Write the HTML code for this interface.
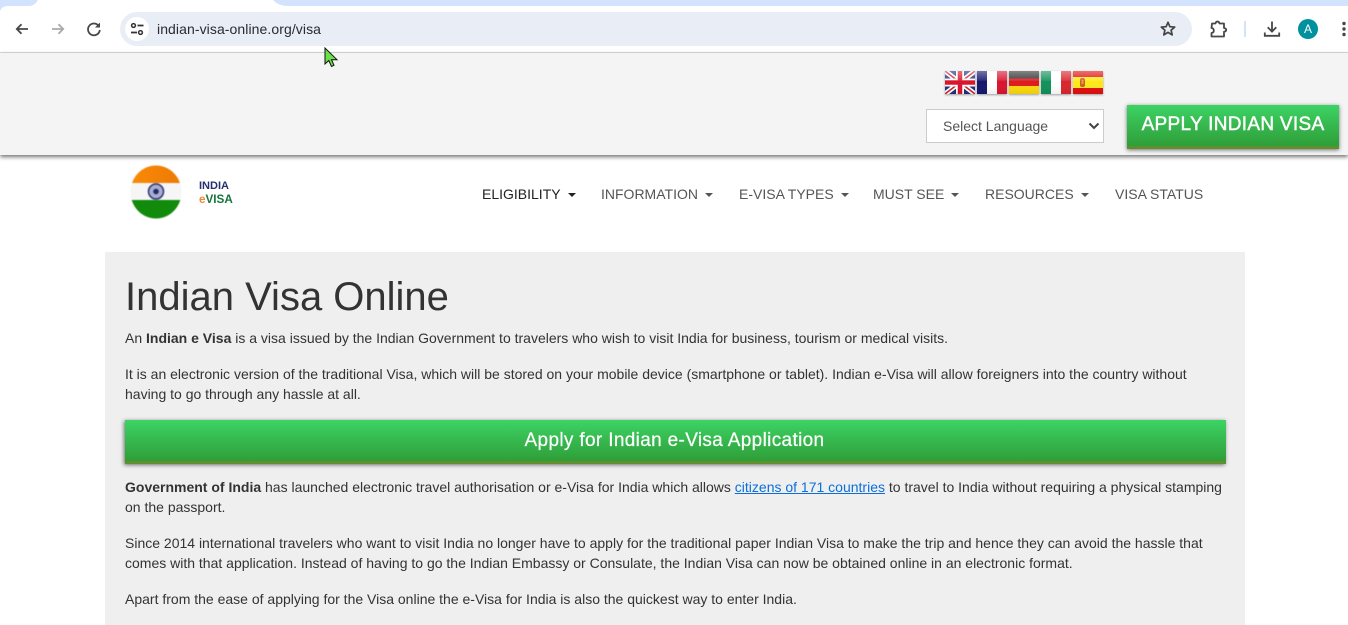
<!DOCTYPE html>
<html lang="en"><head><meta charset="utf-8"><title>Indian Visa Online</title>
<style>
html,body{margin:0;padding:0;width:1348px;height:625px;overflow:hidden;background:#fff;font-family:"Liberation Sans",Arial,sans-serif;color:#333}
.a{position:absolute;white-space:nowrap}
.p{position:absolute;left:125px;font-size:14px;line-height:20px;color:#333;white-space:nowrap}
.n{position:absolute;top:184px;font-size:14px;line-height:20px;color:#555;white-space:nowrap}
.n i{display:inline-block;width:0;height:0;border:4px solid transparent;border-top-color:#555;border-bottom:0;margin-left:7px;vertical-align:2px}
.g{background:linear-gradient(#3dd365,#2f9e38);border-bottom:3px solid #5f8f2e;box-sizing:border-box;color:#fff;text-align:center}
.f{position:absolute;top:71px;width:30px;height:23px;box-sizing:border-box;overflow:hidden;box-shadow:0 1px 2px rgba(0,0,0,.35)}
</style></head><body>

<!-- browser chrome -->
<div class="a" style="left:0;top:6px;width:1348px;height:46px;background:#fff"></div>
<svg class="a" style="left:0;top:0" width="1348" height="14" viewBox="0 0 1348 14">
<path d="M0 0H38C36 3 34 6 29 6H8C3 6 0 9 0 12Z" fill="#d3e3fd"/>
<path d="M273 0H1348V6H288C280 6 276 3 273 0Z" fill="#d3e3fd"/>
</svg>
<div class="a" style="left:0;top:52px;width:1348px;height:1px;background:#dcdcdc"></div>
<div class="a" style="left:120px;top:12px;width:1072px;height:34px;border-radius:17px;background:#e9edf6"></div>
<div class="a" style="left:125px;top:17px;width:24px;height:24px;border-radius:12px;background:#fff"></div>
<svg class="a" style="left:0;top:0" width="160" height="52" viewBox="0 0 160 52" fill="none">
<path d="M28 29H17M21.500 24.200L16.800 29l4.700 4.800" stroke="#474747" stroke-width="1.800"/>
<path d="M52 29H63M58.500 24.200L63.200 29l-4.700 4.800" stroke="#a9a9a9" stroke-width="1.800"/>
<path d="M98.600 25.800A5.900 5.900 0 1 0 99.800 30" stroke="#474747" stroke-width="1.800"/>
<path d="M100 22.500V27.500H95Z" fill="#474747"/>
<circle cx="133.500" cy="25.500" r="1.900" stroke="#333" stroke-width="1.500"/>
<path d="M137.500 25.500H143.500M131 32.500H137" stroke="#333" stroke-width="1.700"/>
<circle cx="140.500" cy="32.500" r="1.900" stroke="#333" stroke-width="1.500"/>
</svg>
<div class="a" style="left:157px;top:20px;font-size:14px;line-height:18px;letter-spacing:.08px;color:#282b30">indian-visa-online.org/visa</div>
<svg class="a" style="left:1150px;top:10px" width="198" height="38" viewBox="1150 10 198 38" fill="none">
<path d="M1168 22.300l1.900 4.400 4.800.4-3.600 3.100 1.100 4.700-4.200-2.500-4.200 2.500 1.100-4.700-3.600-3.100 4.800-.4Z" stroke="#444" stroke-width="1.700" stroke-linejoin="round"/>
<path d="M1212 23.500h3.500c.3-1.500 1.200-2 2-2s1.700.5 2 2h4.500v4.500c1.500.2 2.200 1 2.200 1.900s-.7 1.700-2.200 1.900v4.700h-12.500v-3.500c1.500-.2 2.300-1.200 2.300-2.500s-.8-2.300-2.300-2.500z" stroke="#474747" stroke-width="1.800" stroke-linejoin="round"/>
<rect x="1244" y="21" width="2" height="16" fill="#d3e3fd"/>
<path d="M1272 21.500v9.500M1267.700 27.300l4.300 4.300 4.300-4.300M1264.800 32.500v3.300h14.400v-3.300" stroke="#474747" stroke-width="1.800"/>
<circle cx="1308" cy="29" r="10" fill="#00919e"/>
<circle cx="1344" cy="23.500" r="1.700" fill="#474747"/><circle cx="1344" cy="29" r="1.700" fill="#474747"/><circle cx="1344" cy="34.500" r="1.700" fill="#474747"/>
</svg>
<div class="a" style="left:1298px;top:22px;width:20px;text-align:center;font-size:12px;line-height:14px;color:#fff">A</div>

<!-- top band -->
<div class="a" style="left:0;top:53px;width:1348px;height:102px;background:#f4f4f4;box-shadow:0 2px 4px rgba(0,0,0,.55)"></div>
<svg class="a" style="left:324px;top:47px" width="15" height="21" viewBox="0 0 15 21"><path d="M1 1V17L4.800 13.500 7.500 19.500 10 18.300 7.500 12.700H13Z" fill="#6be04a" stroke="#111" stroke-width="1"/></svg>

<!-- flags -->
<svg width="0" height="0" style="position:absolute"><defs><linearGradient id="gl" x1="0" y1="0" x2="0" y2="1"><stop offset="0" stop-color="#fff" stop-opacity=".4"/><stop offset=".42" stop-color="#fff" stop-opacity=".1"/><stop offset=".43" stop-color="#fff" stop-opacity="0"/><stop offset="1" stop-color="#000" stop-opacity=".06"/></linearGradient></defs></svg>
<svg class="f" style="left:945px" viewBox="0 0 30 23"><rect width="30" height="23" fill="#1f2f78"/><path d="M0 0L30 23M30 0L0 23" stroke="#fff" stroke-width="5"/><path d="M0 0L30 23M30 0L0 23" stroke="#cf2030" stroke-width="1.500"/><path d="M15 0V23M0 11.500H30" stroke="#fff" stroke-width="8"/><path d="M15 0V23M0 11.500H30" stroke="#d8152c" stroke-width="4.500"/><rect width="30" height="23" fill="url(#gl)"/></svg>
<svg class="f" style="left:977px" viewBox="0 0 30 23"><rect width="10" height="23" fill="#14176e"/><rect x="10" width="10" height="23" fill="#fff"/><rect x="20" width="10" height="23" fill="#d9152e"/><rect width="30" height="23" fill="url(#gl)"/></svg>
<svg class="f" style="left:1009px" viewBox="0 0 30 23"><rect width="30" height="8" fill="#333"/><rect y="7.500" width="30" height="8" fill="#dd1a1e"/><rect y="15" width="30" height="8" fill="#fbd80f"/><rect width="30" height="23" fill="url(#gl)"/></svg>
<svg class="f" style="left:1041px" viewBox="0 0 30 23"><rect width="10" height="23" fill="#12915a"/><rect x="10" width="10" height="23" fill="#fff"/><rect x="20" width="10" height="23" fill="#d9262e"/><rect width="30" height="23" fill="url(#gl)"/></svg>
<svg class="f" style="left:1073px" viewBox="0 0 30 23"><rect width="30" height="23" fill="#e0100f"/><rect y="6" width="30" height="11" fill="#ffe81a"/><rect x="7" y="7" width="5" height="9" rx="2" fill="#c8602a"/><rect x="8.500" y="9" width="2" height="4" fill="#e8a030"/><rect width="30" height="23" fill="url(#gl)"/></svg>

<!-- select -->
<div class="a" style="left:926px;top:109px;width:178px;height:34px;box-sizing:border-box;background:#fff;border:1px solid #ccc"></div>
<div class="a" style="left:943px;top:118px;font-size:14px;line-height:16px;color:#555">Select Language</div>
<svg class="a" style="left:1088px;top:122px" width="12" height="8" viewBox="0 0 12 8" fill="none"><path d="M1.500 1.500L6 6l4.500-4.500" stroke="#444" stroke-width="2"/></svg>

<div class="a g" style="left:1127px;top:105px;width:212px;height:44px;font-size:19px;letter-spacing:.3px;line-height:40px;-webkit-text-stroke:.45px #fff;box-shadow:0 1px 4px rgba(0,0,0,.55)">APPLY INDIAN VISA</div>

<!-- logo -->
<svg class="a" style="left:130px;top:165px;filter:blur(.4px)" width="52" height="54" viewBox="0 0 52 54">
<defs><clipPath id="c"><ellipse cx="26" cy="27" rx="25.500" ry="26.500"/></clipPath><linearGradient id="o" x1="0" x2="1" y1="0" y2="0"><stop offset="0" stop-color="#fb8a07"/><stop offset="1" stop-color="#ec7a05"/></linearGradient></defs>
<g clip-path="url(#c)"><rect width="52" height="18" fill="url(#o)"/><rect y="18" width="52" height="17" fill="#f6f6f6"/><rect y="35" width="52" height="19" fill="#128a0c"/></g>
<circle cx="26" cy="26.500" r="7.500" fill="#a9add0" stroke="#2c3375" stroke-width="1.500"/><circle cx="26" cy="26.500" r="2.800" fill="#232a6a"/>
</svg>
<div class="a" style="left:199px;top:180px;font-size:11px;line-height:12px;font-weight:bold;color:#26306e">INDIA</div>
<div class="a" style="left:199px;top:193px;font-size:11.700px;line-height:13px;font-weight:bold;color:#14773a"><span style="color:#f0883a">e</span>VISA</div>

<!-- nav -->
<div class="n" style="left:482px;color:#222">ELIGIBILITY<i style="border-top-color:#222"></i></div>
<div class="n" style="left:601px">INFORMATION<i></i></div>
<div class="n" style="left:739px">E-VISA TYPES<i></i></div>
<div class="n" style="left:873px">MUST SEE<i></i></div>
<div class="n" style="left:985px">RESOURCES<i></i></div>
<div class="n" style="left:1115px">VISA STATUS</div>

<!-- content -->
<div class="a" style="left:105px;top:252px;width:1140px;height:373px;background:#efefef"></div>
<div class="a" style="left:125px;top:274px;font-size:40px;line-height:46px;color:#333">Indian Visa Online</div>
<div class="p" style="top:328px">An <b>Indian e Visa</b> is a visa issued by the Indian Government to travelers who wish to visit India for business, tourism or medical visits.</div>
<div class="p" style="top:364px">It is an electronic version of the traditional Visa, which will be stored on your mobile device (smartphone or tablet). Indian e-Visa will allow foreigners into the country without</div>
<div class="p" style="top:384px">having to go through any hassle at all.</div>
<div class="a g" style="left:125px;top:420px;width:1101px;height:44px;font-size:19px;line-height:42px;letter-spacing:.34px;-webkit-text-stroke:.2px #fff;box-shadow:-1px 1px 4px rgba(0,0,0,.55)"><span style="position:relative;left:-1px">Apply for Indian e-Visa Application</span></div>
<div class="p" style="top:477px"><b>Government of India</b> has launched electronic travel authorisation or e-Visa for India which allows <span style="color:#0b6fdb;text-decoration:underline">citizens of 171 countries</span> to travel to India without requiring a physical stamping</div>
<div class="p" style="top:497px">on the passport.</div>
<div class="p" style="top:533px">Since 2014 international travelers who want to visit India no longer have to apply for the traditional paper Indian Visa to make the trip and hence they can avoid the hassle that</div>
<div class="p" style="top:553px">comes with that application. Instead of having to go the Indian Embassy or Consulate, the Indian Visa can now be obtained online in an electronic format.</div>
<div class="p" style="top:589px">Apart from the ease of applying for the Visa online the e-Visa for India is also the quickest way to enter India.</div>
</body></html>
